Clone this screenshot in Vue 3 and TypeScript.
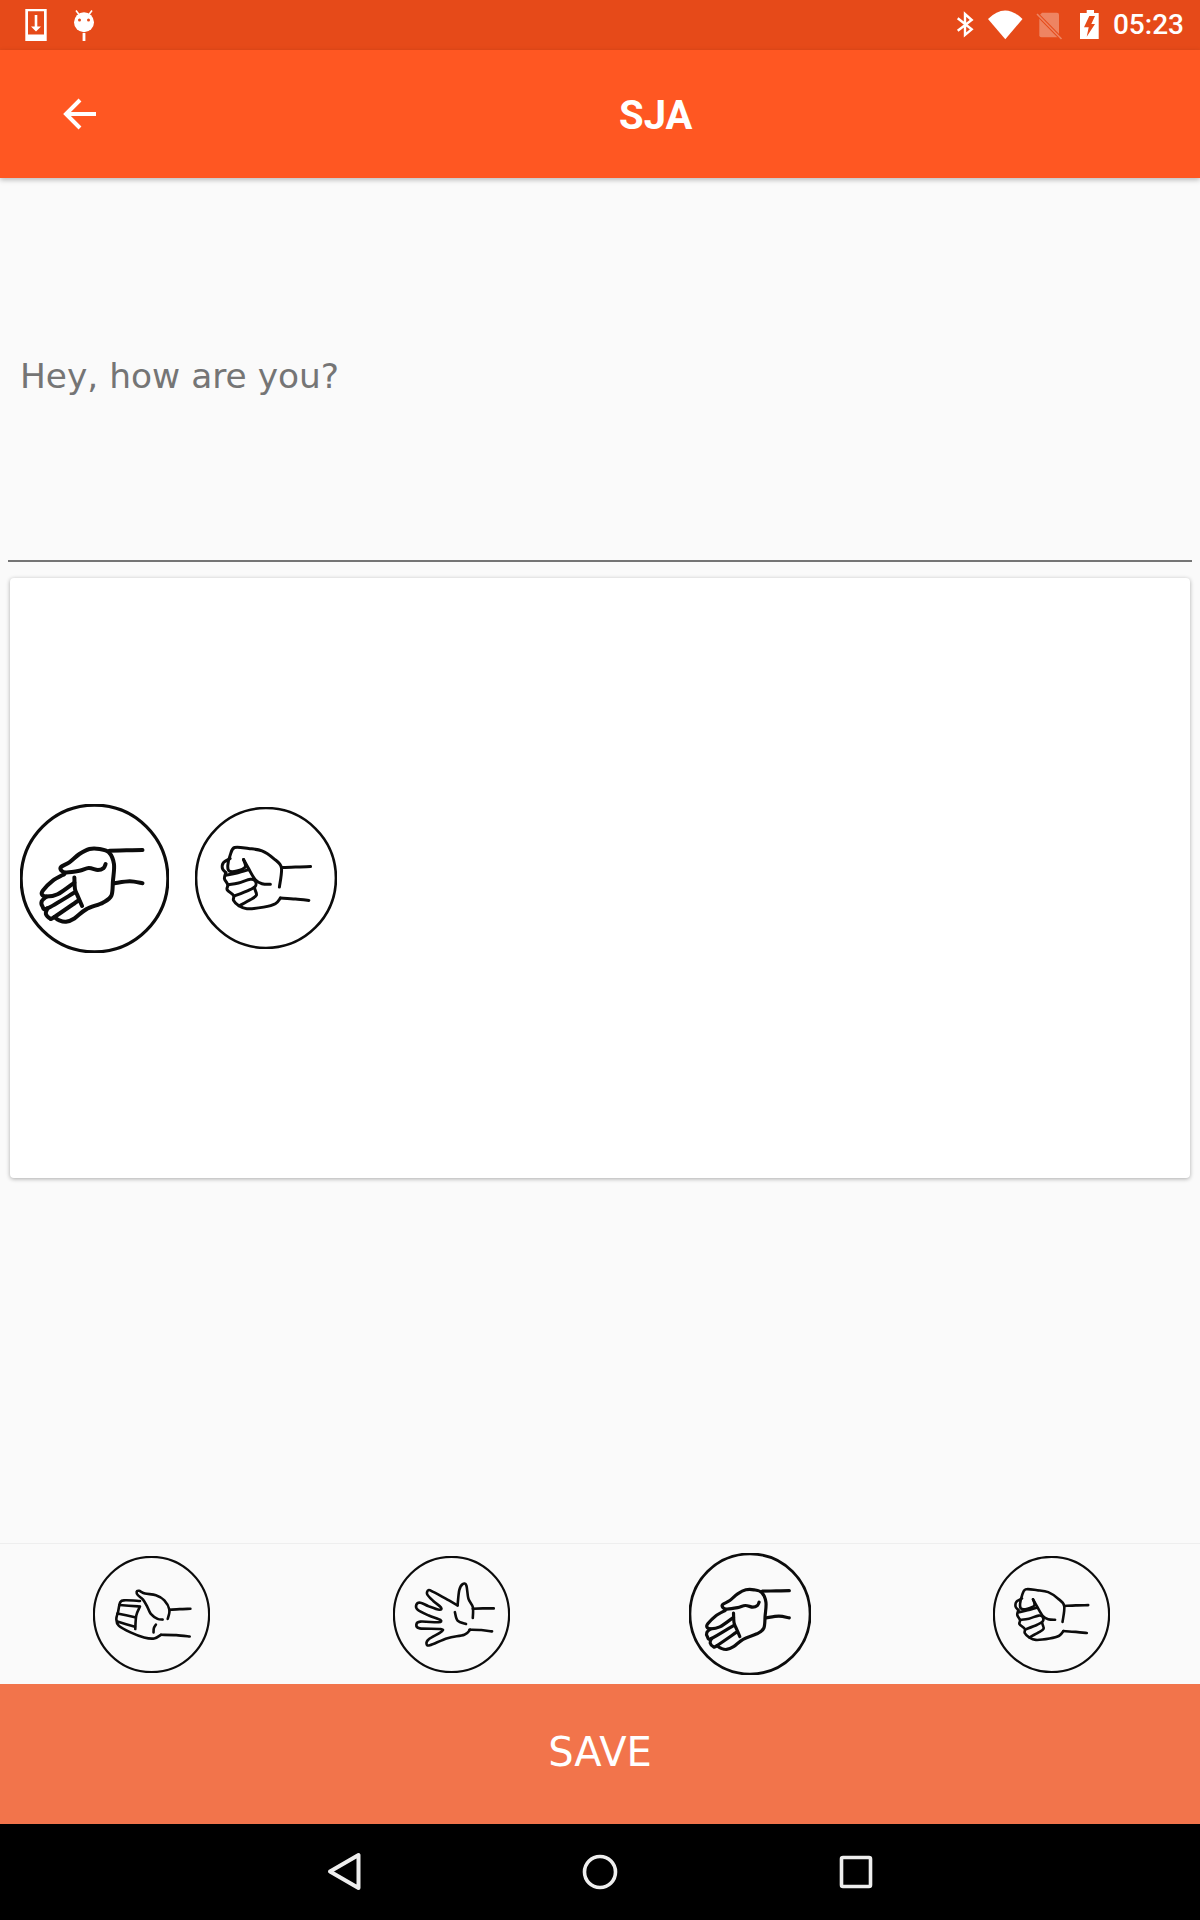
<script setup lang="ts">
type Pt = [number, number]
interface Hand { cx: number; cy: number; R: number; strokes: Pt[][] }

function smooth(p: Pt[]): string {
  let d = `M${p[0][0]} ${p[0][1]}`
  for (let i = 0; i < p.length - 1; i++) {
    const a = p[Math.max(i - 1, 0)], b = p[i], c = p[i + 1], e = p[Math.min(i + 2, p.length - 1)]
    const c1x = b[0] + (c[0] - a[0]) / 6, c1y = b[1] + (c[1] - a[1]) / 6
    const c2x = c[0] - (e[0] - b[0]) / 6, c2y = c[1] - (e[1] - b[1]) / 6
    d += `C${c1x.toFixed(1)} ${c1y.toFixed(1)} ${c2x.toFixed(1)} ${c2y.toFixed(1)} ${c[0]} ${c[1]}`
  }
  return d
}

const shift = (dx: number, dy: number, s: Pt[][]): Pt[][] =>
  s.map((line) => line.map(([x, y]): Pt => [x + dx, y + dy]))

const hands: Record<string, Hand> = {
  back: {
    cx: 285, cy: 293, R: 222,
    strokes: shift(90, 150, [
      [[240, 60], [290, 59], [338, 58]],
      [[255, 157], [300, 151], [338, 157]],
      [[228, 100], [222, 112], [205, 118], [178, 112], [150, 120], [110, 125], [96, 119], [96, 108], [120, 95], [150, 70], [180, 55], [210, 55], [238, 65], [253, 100], [250, 150], [245, 195], [220, 215], [170, 235], [135, 262], [110, 272], [90, 268], [75, 258]],
      [[105, 130], [70, 150], [42, 178], [38, 190], [52, 197], [85, 190], [135, 155]],
      [[52, 197], [38, 210], [40, 226], [55, 232], [135, 185]],
      [[55, 232], [50, 248], [62, 262], [75, 258], [145, 210]],
      [[135, 140], [137, 175], [145, 195], [158, 225]],
    ]),
  },
  fist: {
    cx: 797, cy: 293, R: 212,
    strokes: shift(615, 150, [
      [[228, 112], [270, 110], [315, 109]],
      [[225, 203], [270, 206], [310, 210]],
      [[222, 170], [228, 112], [205, 85], [170, 62], [130, 55], [88, 52], [75, 75], [68, 105], [72, 122], [95, 122], [120, 110], [115, 88]],
      [[115, 88], [130, 115], [150, 148], [170, 160], [195, 162]],
      [[75, 85], [55, 97], [52, 115], [62, 127]],
      [[62, 127], [58, 145], [68, 163], [66, 178], [85, 195], [85, 210], [100, 225], [125, 235], [175, 230], [210, 220], [225, 203]],
      [[62, 135], [95, 128], [130, 118]],
      [[68, 163], [100, 158], [135, 147], [150, 152], [150, 168], [130, 180], [87, 197]],
      [[102, 226], [135, 208], [153, 195], [150, 180], [147, 172]],
    ]),
  },
  palm: {
    cx: 212, cy: 222, R: 173,
    strokes: shift(75, 90, [
      [[190, 118], [220, 116], [252, 115]],
      [[165, 192], [210, 193], [250, 197]],
      [[185, 145], [190, 118], [175, 90], [150, 75], [118, 70], [100, 62], [93, 65], [97, 75], [112, 88], [125, 110], [135, 130], [155, 145], [170, 147]],
      [[103, 92], [60, 90], [45, 95], [38, 125], [33, 145], [40, 165], [75, 185], [115, 200], [145, 203], [165, 192]],
      [[42, 104], [98, 108]],
      [[36, 129], [88, 140]],
      [[36, 153], [88, 168]],
      [[103, 108], [92, 135], [89, 175]],
      [[150, 162], [144, 172], [143, 185]],
    ]),
  },
  open: {
    cx: 1112, cy: 222, R: 173,
    strokes: [
      [[1175, 205], [1205, 204], [1237, 204]],
      [[1165, 267], [1200, 268], [1232, 272]],
      [[1130, 195], [1135, 150], [1145, 132], [1156, 136], [1162, 175], [1175, 200], [1175, 232]],
      [[1130, 195], [1095, 175], [1058, 155], [1044, 150], [1040, 162], [1058, 182], [1081, 201], [1076, 208], [1045, 198], [1020, 187], [1008, 193], [1012, 208], [1045, 225], [1079, 238], [1073, 245], [1020, 243], [1008, 252], [1018, 263], [1080, 265], [1082, 273], [1045, 295], [1038, 308], [1048, 313], [1100, 292], [1150, 282], [1167, 267]],
      [[1122, 215], [1130, 240], [1155, 250]],
    ],
  },
}

const paths = (k: string) => hands[k].strokes.map(smooth)
const box = (k: string) => {
  const h = hands[k]
  return `${h.cx - h.R} ${h.cy - h.R} ${h.R * 2} ${h.R * 2}`
}

const picked = [
  { icon: 'back', cls: 'large' },
  { icon: 'fist', cls: 'mid' },
]
const options = [
  { icon: 'palm', cls: 'small' },
  { icon: 'open', cls: 'small' },
  { icon: 'back', cls: 'small-sel' },
  { icon: 'fist', cls: 'small' },
]
</script>

<template>
  <div class="screen">
    <header class="status">
      <svg class="s-ico" viewBox="24 8 24 34">
        <path fill="#fff" fill-rule="evenodd" d="M25.3 9H46.7V41H25.3ZM28 11.2V34.5H44V11.2Z" />
        <path fill="#fff" d="M34.7 15H37.3V26.5H41L36 31.5L31 26.5H34.7Z" />
      </svg>
      <svg class="s-ico android" viewBox="72 8 24 34">
        <circle cx="84" cy="22.3" r="10" fill="#fff" />
        <circle cx="79.5" cy="20" r="1.5" fill="#e64a19" />
        <circle cx="88.5" cy="20" r="1.5" fill="#e64a19" />
        <path stroke="#fff" stroke-width="1.6" d="M76 10.5L79 14.5M92 10.5L89 14.5" />
        <rect x="82.6" y="33" width="2.8" height="8" fill="#fff" />
      </svg>
      <div class="status-right">
        <svg class="s-bt" viewBox="950 10 30 30">
          <path fill="none" stroke="#fff" stroke-width="2.4" d="M957.7 18.3L971.7 29.3L965 35V14L971.7 20L957.7 30.7" />
        </svg>
        <svg class="s-wifi" viewBox="985 8 42 34">
          <path fill="#fff" d="M1006.3 39.3L989 19Q1006 2 1023.5 19Z" />
        </svg>
        <svg class="s-sim" viewBox="1035 10 30 30">
          <path fill="#fff" opacity=".32" d="M1042 12.7H1057Q1059 12.7 1059 14.7V37.3H1041.3Q1039.3 37.3 1039.3 35.3V15.4Z" />
          <path stroke="#e64a19" stroke-width="3.5" d="M1037 14L1061.5 39" />
          <path stroke="#fff" stroke-opacity=".32" stroke-width="1.6" d="M1037 14L1061.5 39" />
        </svg>
        <svg class="s-bat" viewBox="1078 8 24 34">
          <path fill="#fff" d="M1086.7 10H1094V13H1098.7V39H1080V13H1086.7Z" />
          <path fill="#e64a19" d="M1089.3 16H1095L1091.3 24H1095L1086.7 36.7L1088.7 27.3H1084Z" />
        </svg>
        <span class="time">05:23</span>
      </div>
    </header>

    <header class="toolbar">
      <svg class="back" viewBox="0 0 36 34">
        <path fill="none" stroke="#fff" stroke-width="4" d="M34 17H4M18 3L4 17L18 31" />
      </svg>
      <h1 class="title">SJA</h1>
    </header>

    <div class="input">Hey, how are you?</div>

    <section class="card">
      <svg v-for="(p, i) in picked" :key="i" class="hand" :class="p.cls" :viewBox="box(p.icon)">
        <circle :cx="hands[p.icon].cx" :cy="hands[p.icon].cy" :r="hands[p.icon].R * 0.985" />
        <path v-for="(d, j) in paths(p.icon)" :key="j" :d="d" />
      </svg>
    </section>

    <div class="spacer"></div>

    <section class="tray">
      <div v-for="(o, i) in options" :key="i" class="slot">
        <svg class="hand" :class="o.cls" :viewBox="box(o.icon)">
          <circle :cx="hands[o.icon].cx" :cy="hands[o.icon].cy" :r="hands[o.icon].R * 0.985" />
          <path v-for="(d, j) in paths(o.icon)" :key="j" :d="d" />
        </svg>
      </div>
    </section>

    <button class="save">SAVE</button>

    <nav class="navbar">
      <svg class="nav-ico" viewBox="320 1850 48 44">
        <path fill="none" stroke="#eee" stroke-width="4" stroke-linejoin="round" d="M358.5 1855V1888L330 1871.5Z" />
      </svg>
      <svg class="nav-ico" viewBox="576 1850 48 44">
        <circle cx="600" cy="1872" r="15.5" fill="none" stroke="#eee" stroke-width="3.6" />
      </svg>
      <svg class="nav-ico" viewBox="833 1850 48 44">
        <rect x="842.5" y="1857.5" width="29" height="29" rx="1.5" fill="none" stroke="#eee" stroke-width="3.6" />
      </svg>
    </nav>
  </div>
</template>

<style scoped>
.screen {
  width: 1200px;
  height: 1920px;
  display: flex;
  flex-direction: column;
  background: #fafafa;
  overflow: hidden;
  font-family: "DejaVu Sans", sans-serif;
}
.status {
  height: 50px;
  flex: none;
  background: #e64a19;
  display: flex;
  align-items: center;
  padding: 0 16px 0 24px;
}
.s-ico { width: 24px; height: 34px; }
.android { margin-left: 24px; }
.status-right {
  margin-left: auto;
  display: flex;
  align-items: center;
}
.s-bt { width: 30px; height: 30px; }
.s-wifi { width: 42px; height: 34px; margin-left: 4px; }
.s-sim { width: 30px; height: 30px; margin-left: 9px; }
.s-bat { width: 24px; height: 34px; margin-left: 13px; }
.time {
  font: 500 28px/1 Roboto, sans-serif;
  color: #fff;
  margin-left: 11px;
}
.toolbar {
  height: 128px;
  flex: none;
  background: #ff5722;
  display: flex;
  align-items: center;
  padding-left: 62px;
  box-shadow: 0 2px 5px rgba(0, 0, 0, 0.26);
  position: relative;
  z-index: 1;
}
.back { width: 36px; height: 34px; }
.title {
  margin: 4px 0 0 521px;
  font: 700 40px/1 Roboto, sans-serif;
  color: #fff;
}
.input {
  height: 384px;
  flex: none;
  box-sizing: border-box;
  margin: 0 8px;
  padding: 14px 12px 0;
  display: flex;
  align-items: center;
  font-size: 34.4px;
  color: #757575;
  border-bottom: 2px solid #757575;
}
.card {
  height: 600px;
  flex: none;
  box-sizing: border-box;
  margin: 16px 10px 0;
  padding-left: 10px;
  display: flex;
  align-items: center;
  gap: 26px;
  background: #fff;
  border-radius: 4px;
  box-shadow: 0 1px 4px rgba(0, 0, 0, 0.32);
}
.spacer { flex: 1; }
.tray {
  height: 141px;
  flex: none;
  box-sizing: border-box;
  display: flex;
  border-top: 1px solid #eee;
}
.slot {
  flex: 1;
  display: flex;
  align-items: center;
  justify-content: center;
  padding-left: 2px;
}
.hand { display: block; flex: none; }
.hand circle, .hand path {
  fill: none;
  stroke: #0c0c0c;
  stroke-linecap: round;
  stroke-linejoin: round;
  vector-effect: non-scaling-stroke;
}
.large { width: 149px; height: 149px; }
.mid { width: 142px; height: 142px; }
.small { width: 117px; height: 117px; }
.small-sel { width: 122px; height: 122px; margin-left: -2px; }
.large circle { stroke-width: 3.2px; }
.large path { stroke-width: 4px; }
.mid circle { stroke-width: 2.6px; }
.mid path { stroke-width: 3px; }
.small circle { stroke-width: 2.2px; }
.small path { stroke-width: 2.6px; }
.small-sel circle { stroke-width: 2.8px; }
.small-sel path { stroke-width: 3.2px; }
.save {
  height: 140px;
  flex: none;
  border: 0;
  padding: 0 0 4px;
  background: #f2744b;
  color: #fff;
  font: 400 40px/1 "DejaVu Sans", sans-serif;
}
.navbar {
  height: 96px;
  flex: none;
  background: #000;
  display: flex;
  justify-content: center;
  gap: 208px;
  padding-top: 26px;
  box-sizing: border-box;
}
.nav-ico { width: 48px; height: 44px; }
</style>

<style>
html, body { margin: 0; background: #fafafa; }
</style>
